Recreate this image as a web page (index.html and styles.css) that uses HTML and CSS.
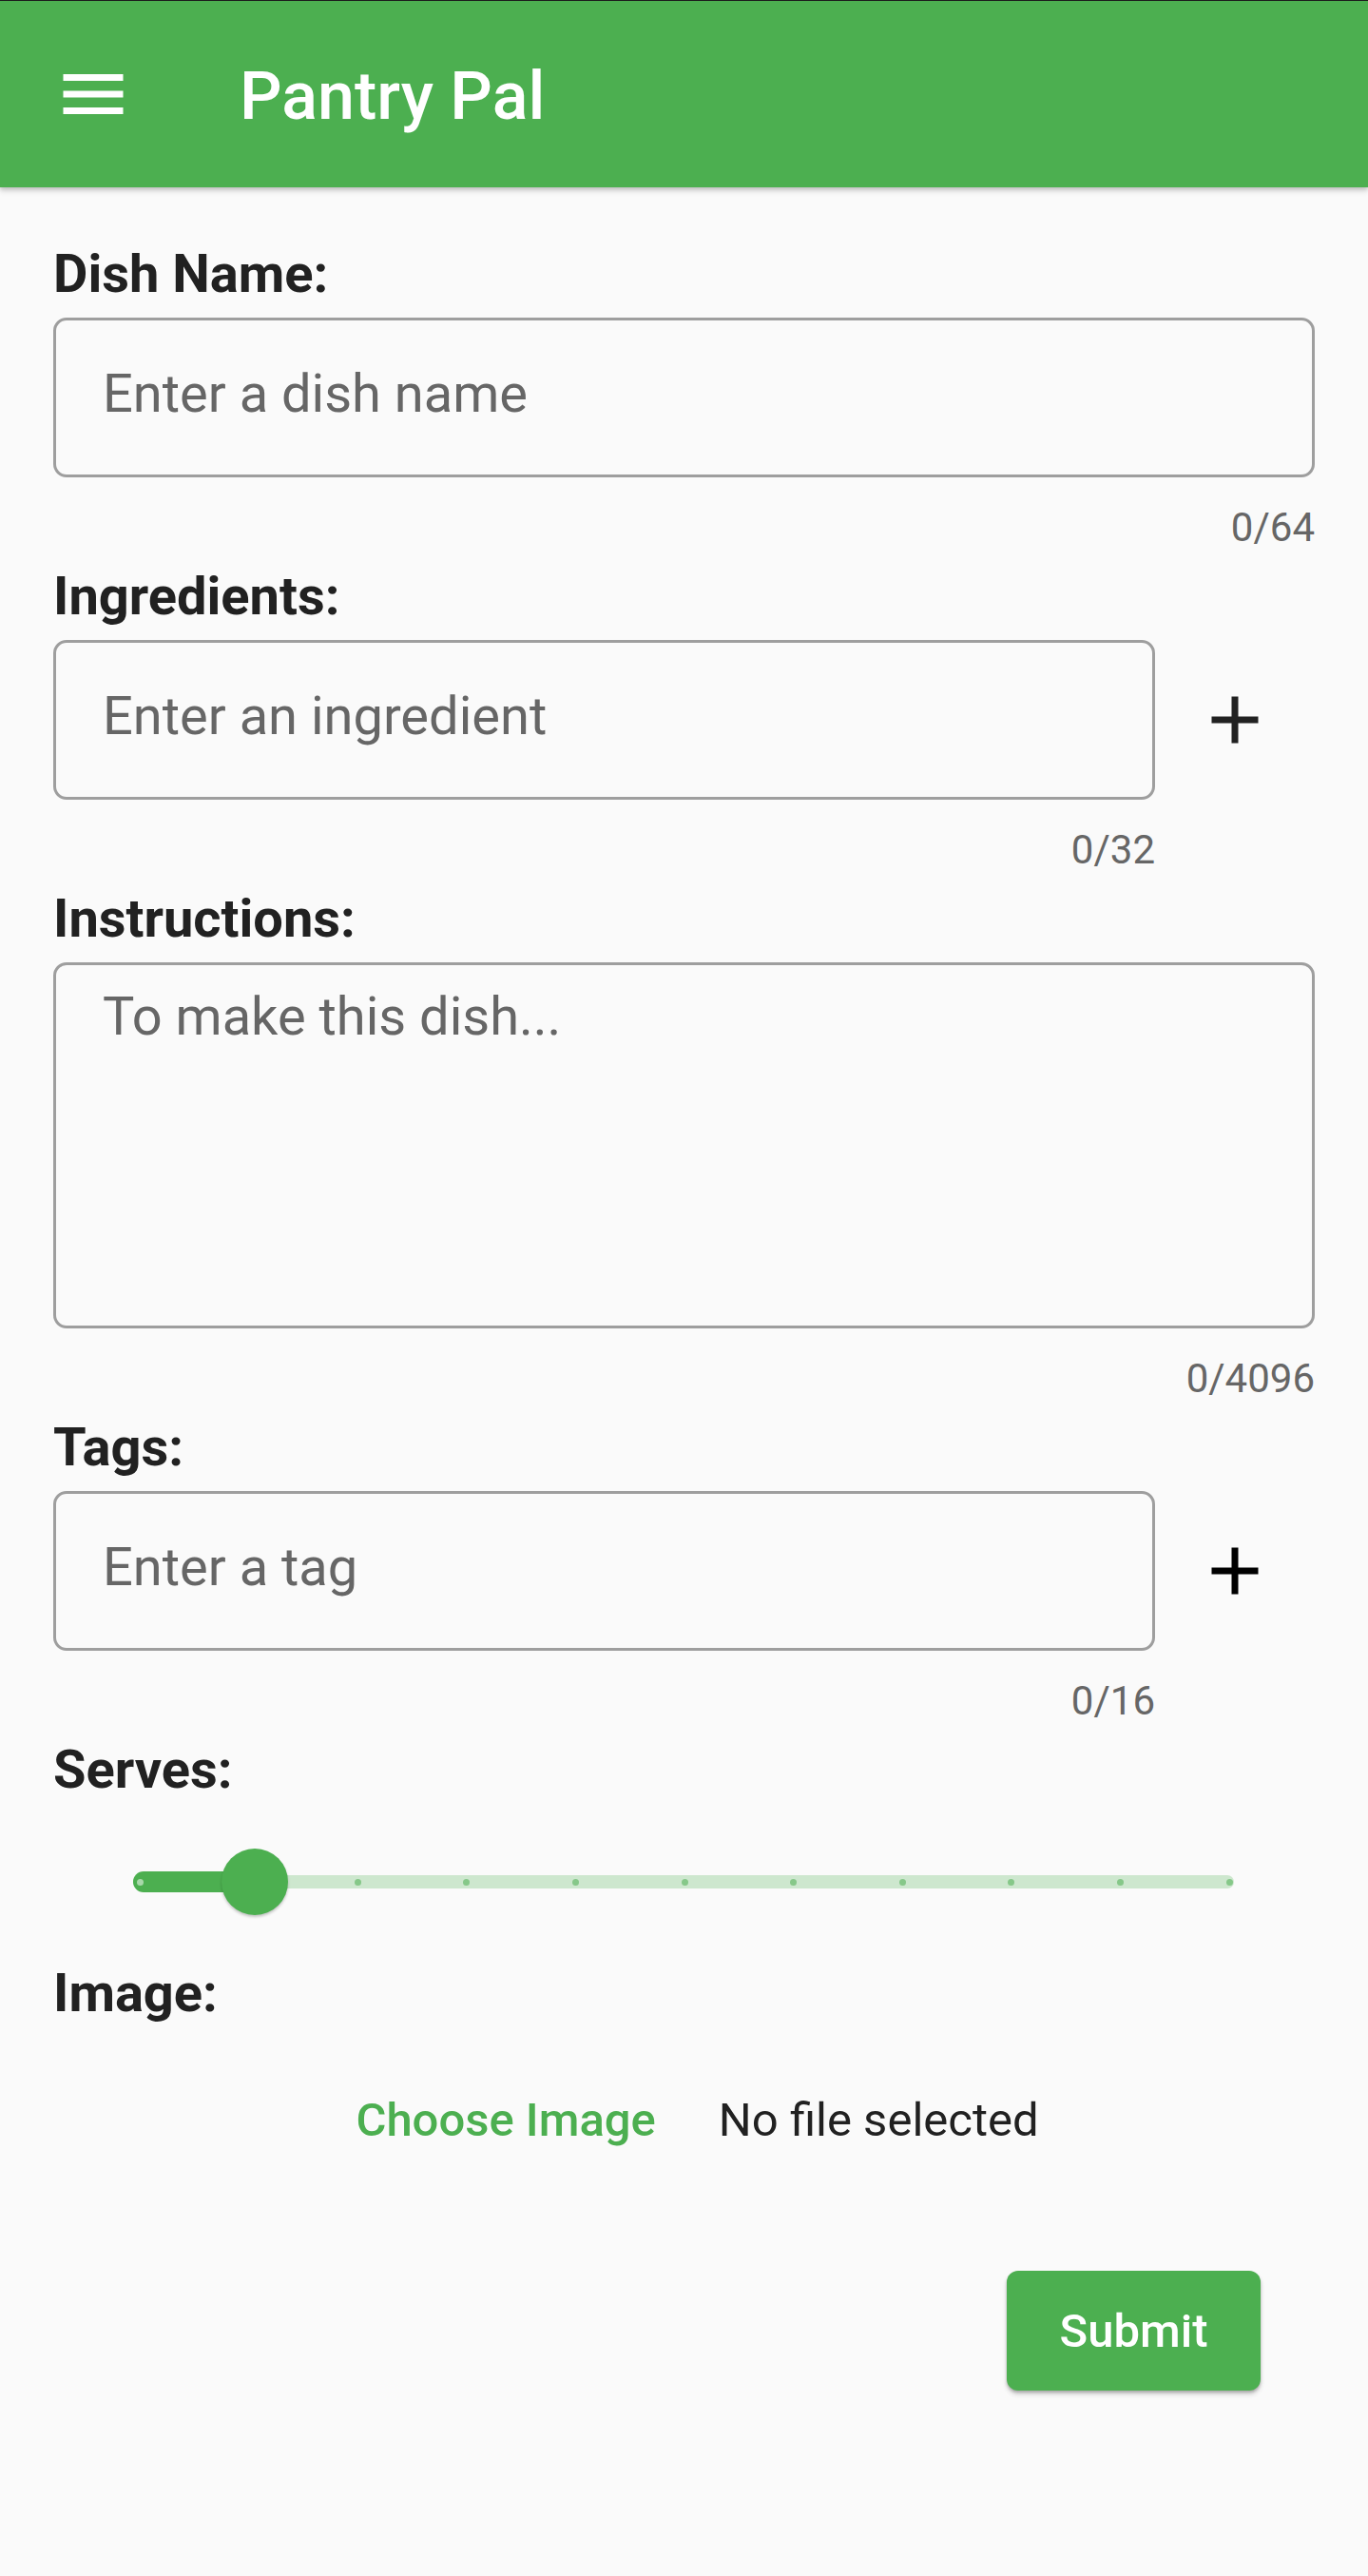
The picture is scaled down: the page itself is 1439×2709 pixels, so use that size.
FILE: index.html
```html
<!DOCTYPE html>
<html lang="en">
<head>
<meta charset="utf-8">
<title>Pantry Pal</title>
<link rel="stylesheet" href="styles.css">
</head>
<body>
<div class="app">
  <header class="appbar">
    <button class="menu-btn" aria-label="Menu">
      <svg viewBox="0 0 24 24" width="84" height="84"><path d="M3 18h18v-2H3v2zm0-5h18v-2H3v2zm0-7v2h18V6H3z" fill="#ffffff"/></svg>
    </button>
    <h1 class="title">Pantry Pal</h1>
  </header>

  <main class="form">
    <div class="field">
      <label class="label">Dish Name:</label>
      <input class="input" type="text" placeholder="Enter a dish name">
      <div class="counter">0/64</div>
    </div>

    <div class="field">
      <label class="label">Ingredients:</label>
      <div class="input-row">
        <div class="input-col">
          <input class="input" type="text" placeholder="Enter an ingredient">
          <div class="counter">0/32</div>
        </div>
        <button class="icon-btn" aria-label="Add ingredient">
          <svg viewBox="0 0 24 24" width="84" height="84"><path d="M19 13h-6v6h-2v-6H5v-2h6V5h2v6h6v2z" fill="#212121"/></svg>
        </button>
      </div>
    </div>

    <div class="field">
      <label class="label">Instructions:</label>
      <textarea class="textarea" placeholder="To make this dish..."></textarea>
      <div class="counter">0/4096</div>
    </div>

    <div class="field">
      <label class="label">Tags:</label>
      <div class="input-row">
        <div class="input-col">
          <input class="input" type="text" placeholder="Enter a tag">
          <div class="counter">0/16</div>
        </div>
        <button class="icon-btn" aria-label="Add tag">
          <svg viewBox="0 0 24 24" width="84" height="84"><path d="M19 13h-6v6h-2v-6H5v-2h6V5h2v6h6v2z" fill="#000000"/></svg>
        </button>
      </div>
    </div>

    <label class="label">Serves:</label>
    <div class="slider">
      <div class="track">
        <div class="track-active"></div>
        <span class="tick tick-on" style="left:3.5px"></span>
        <span class="tick" style="left:118.1px"></span>
        <span class="tick" style="left:232.7px"></span>
        <span class="tick" style="left:347.3px"></span>
        <span class="tick" style="left:461.9px"></span>
        <span class="tick" style="left:576.5px"></span>
        <span class="tick" style="left:691.1px"></span>
        <span class="tick" style="left:805.7px"></span>
        <span class="tick" style="left:920.3px"></span>
        <span class="tick" style="left:1034.9px"></span>
        <span class="tick" style="left:1149.5px"></span>
        <div class="thumb"></div>
      </div>
    </div>

    <label class="label">Image:</label>
    <div class="file-row">
      <button class="text-btn">Choose Image</button>
      <span class="file-name">No file selected</span>
    </div>

    <div class="submit-row">
      <button class="submit-btn">Submit</button>
    </div>
  </main>
</div>
</body>
</html>
```

FILE: styles.css
```css
* {
  box-sizing: border-box;
}

html, body {
  margin: 0;
  padding: 0;
  background: #fafafa;
}

body {
  font-family: Roboto, "Noto Sans", "Liberation Sans", sans-serif;
  color: #212121;
}

.app {
  min-height: 2709px;
  background: #fafafa;
}

.appbar {
  position: relative;
  z-index: 2;
  display: flex;
  align-items: center;
  height: 197px;
  border-top: 1px solid #1c1c1c;
  background: #4caf50;
  padding-left: 56px;
  box-shadow: 0 4px 6px rgba(0, 0, 0, 0.14), 0 2px 4px rgba(0, 0, 0, 0.12);
}

.menu-btn {
  display: flex;
  width: 84px;
  height: 84px;
  padding: 0;
  border: none;
  background: none;
}

.title {
  margin: 4px 0 0 112px;
  font-size: 70px;
  line-height: 82px;
  font-weight: 500;
  color: #ffffff;
  letter-spacing: 0;
}

.form {
  padding: 58px 56px 0;
}

.field {
  margin-bottom: 14px;
}

.label {
  display: block;
  margin-bottom: 13px;
  font-size: 56px;
  line-height: 66px;
  font-weight: 700;
  color: #212121;
}

.input,
.textarea {
  display: block;
  width: 100%;
  margin: 0;
  border: 3px solid #9e9e9e;
  border-radius: 14px;
  background: #fafafa;
  font-family: Roboto, "Noto Sans", "Liberation Sans", sans-serif;
  font-size: 56px;
  font-weight: 400;
  color: #212121;
  outline: none;
}

.input {
  height: 168px;
  padding: 0 0 8px 49px;
}

.textarea {
  height: 385px;
  padding: 21px 49px;
  line-height: 66px;
  resize: none;
}

.input::placeholder,
.textarea::placeholder {
  color: #666666;
  opacity: 1;
}

.counter {
  margin-top: 28px;
  font-size: 42px;
  line-height: 50px;
  color: #666666;
  text-align: right;
}

.input-row {
  display: flex;
  align-items: flex-start;
}

.input-col {
  flex: 1;
}

.icon-btn {
  display: flex;
  align-items: center;
  justify-content: center;
  width: 168px;
  height: 168px;
  padding: 0;
  border: none;
  background: none;
}

.slider {
  display: flex;
  align-items: center;
  height: 144px;
  margin-bottom: 12px;
  padding: 0 85px 0 84px;
}

.track {
  position: relative;
  flex: 1;
  height: 14px;
  border-radius: 7px;
  background: #cde7ce;
}

.track-active {
  position: absolute;
  left: 0;
  top: -4px;
  width: 129px;
  height: 22px;
  border-radius: 11px 0 0 11px;
  background: #4caf50;
}

.tick {
  position: absolute;
  top: 3.5px;
  width: 7px;
  height: 7px;
  border-radius: 50%;
  background: #86c889;
}

.tick-on {
  background: #a8d8aa;
}

.thumb {
  position: absolute;
  left: 93px;
  top: -28px;
  width: 70px;
  height: 70px;
  border-radius: 50%;
  background: #4caf50;
  box-shadow: 0 2px 3px rgba(0, 0, 0, 0.22);
}

.file-row {
  display: flex;
  justify-content: center;
  align-items: center;
  gap: 38px;
  padding-top: 59px;
  line-height: 58px;
}

.text-btn {
  padding: 0 28px;
  border: none;
  background: none;
  font-family: Roboto, "Noto Sans", "Liberation Sans", sans-serif;
  font-size: 49px;
  line-height: 58px;
  font-weight: 500;
  color: #4caf50;
}

.file-name {
  font-size: 49px;
  line-height: 58px;
  font-weight: 400;
  color: #212121;
}

.submit-row {
  display: flex;
  justify-content: flex-end;
  margin-top: 129px;
  padding-right: 57px;
}

.submit-btn {
  width: 267px;
  height: 126px;
  border: none;
  border-radius: 12px;
  background: #4caf50;
  font-family: Roboto, "Noto Sans", "Liberation Sans", sans-serif;
  font-size: 49px;
  font-weight: 500;
  color: #ffffff;
  box-shadow: 0 4px 5px rgba(0, 0, 0, 0.16), 0 2px 3px rgba(0, 0, 0, 0.2);
}
```
